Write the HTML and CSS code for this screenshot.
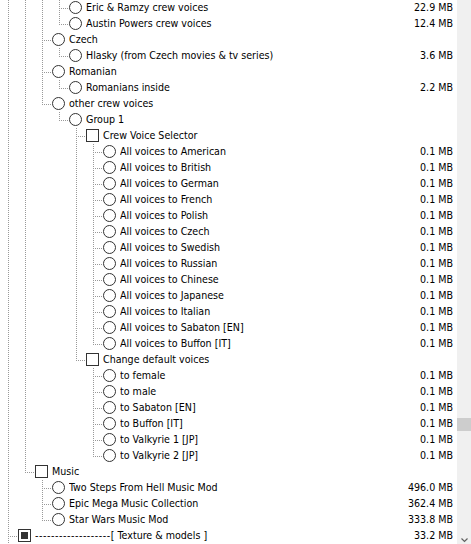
FILE: index.html
```html
<!DOCTYPE html>
<html>
<head>
<meta charset="utf-8">
<link rel="stylesheet" href="styles.css">
</head>
<body>
<div class="window">
  <ul class="tree">
    <li class="row"><span class="g g-v"></span><span class="g g-v"></span><span class="g g-v"></span><span class="g g-t"></span><span class="icon radio"></span><span class="label">Eric &amp; Ramzy crew voices</span><span class="size">22.9 MB</span></li>
    <li class="row"><span class="g g-v"></span><span class="g g-v"></span><span class="g g-v"></span><span class="g g-l"></span><span class="icon radio"></span><span class="label">Austin Powers crew voices</span><span class="size">12.4 MB</span></li>
    <li class="row"><span class="g g-v"></span><span class="g g-v"></span><span class="g g-t"></span><span class="icon radio"></span><span class="label">Czech</span></li>
    <li class="row"><span class="g g-v"></span><span class="g g-v"></span><span class="g g-v"></span><span class="g g-l"></span><span class="icon radio"></span><span class="label">Hlasky (from Czech movies &amp; tv series)</span><span class="size">3.6 MB</span></li>
    <li class="row"><span class="g g-v"></span><span class="g g-v"></span><span class="g g-t"></span><span class="icon radio"></span><span class="label">Romanian</span></li>
    <li class="row"><span class="g g-v"></span><span class="g g-v"></span><span class="g g-v"></span><span class="g g-l"></span><span class="icon radio"></span><span class="label">Romanians inside</span><span class="size">2.2 MB</span></li>
    <li class="row"><span class="g g-v"></span><span class="g g-v"></span><span class="g g-l"></span><span class="icon radio"></span><span class="label">other crew voices</span></li>
    <li class="row"><span class="g g-v"></span><span class="g g-v"></span><span class="g"></span><span class="g g-l"></span><span class="icon radio"></span><span class="label">Group 1</span></li>
    <li class="row"><span class="g g-v"></span><span class="g g-v"></span><span class="g"></span><span class="g"></span><span class="g g-t"></span><span class="icon check"></span><span class="label">Crew Voice Selector</span></li>
    <li class="row"><span class="g g-v"></span><span class="g g-v"></span><span class="g"></span><span class="g"></span><span class="g g-v"></span><span class="g g-t"></span><span class="icon radio"></span><span class="label">All voices to American</span><span class="size">0.1 MB</span></li>
    <li class="row"><span class="g g-v"></span><span class="g g-v"></span><span class="g"></span><span class="g"></span><span class="g g-v"></span><span class="g g-t"></span><span class="icon radio"></span><span class="label">All voices to British</span><span class="size">0.1 MB</span></li>
    <li class="row"><span class="g g-v"></span><span class="g g-v"></span><span class="g"></span><span class="g"></span><span class="g g-v"></span><span class="g g-t"></span><span class="icon radio"></span><span class="label">All voices to German</span><span class="size">0.1 MB</span></li>
    <li class="row"><span class="g g-v"></span><span class="g g-v"></span><span class="g"></span><span class="g"></span><span class="g g-v"></span><span class="g g-t"></span><span class="icon radio"></span><span class="label">All voices to French</span><span class="size">0.1 MB</span></li>
    <li class="row"><span class="g g-v"></span><span class="g g-v"></span><span class="g"></span><span class="g"></span><span class="g g-v"></span><span class="g g-t"></span><span class="icon radio"></span><span class="label">All voices to Polish</span><span class="size">0.1 MB</span></li>
    <li class="row"><span class="g g-v"></span><span class="g g-v"></span><span class="g"></span><span class="g"></span><span class="g g-v"></span><span class="g g-t"></span><span class="icon radio"></span><span class="label">All voices to Czech</span><span class="size">0.1 MB</span></li>
    <li class="row"><span class="g g-v"></span><span class="g g-v"></span><span class="g"></span><span class="g"></span><span class="g g-v"></span><span class="g g-t"></span><span class="icon radio"></span><span class="label">All voices to Swedish</span><span class="size">0.1 MB</span></li>
    <li class="row"><span class="g g-v"></span><span class="g g-v"></span><span class="g"></span><span class="g"></span><span class="g g-v"></span><span class="g g-t"></span><span class="icon radio"></span><span class="label">All voices to Russian</span><span class="size">0.1 MB</span></li>
    <li class="row"><span class="g g-v"></span><span class="g g-v"></span><span class="g"></span><span class="g"></span><span class="g g-v"></span><span class="g g-t"></span><span class="icon radio"></span><span class="label">All voices to Chinese</span><span class="size">0.1 MB</span></li>
    <li class="row"><span class="g g-v"></span><span class="g g-v"></span><span class="g"></span><span class="g"></span><span class="g g-v"></span><span class="g g-t"></span><span class="icon radio"></span><span class="label">All voices to Japanese</span><span class="size">0.1 MB</span></li>
    <li class="row"><span class="g g-v"></span><span class="g g-v"></span><span class="g"></span><span class="g"></span><span class="g g-v"></span><span class="g g-t"></span><span class="icon radio"></span><span class="label">All voices to Italian</span><span class="size">0.1 MB</span></li>
    <li class="row"><span class="g g-v"></span><span class="g g-v"></span><span class="g"></span><span class="g"></span><span class="g g-v"></span><span class="g g-t"></span><span class="icon radio"></span><span class="label">All voices to Sabaton [EN]</span><span class="size">0.1 MB</span></li>
    <li class="row"><span class="g g-v"></span><span class="g g-v"></span><span class="g"></span><span class="g"></span><span class="g g-v"></span><span class="g g-l"></span><span class="icon radio"></span><span class="label">All voices to Buffon [IT]</span><span class="size">0.1 MB</span></li>
    <li class="row"><span class="g g-v"></span><span class="g g-v"></span><span class="g"></span><span class="g"></span><span class="g g-l"></span><span class="icon check"></span><span class="label">Change default voices</span></li>
    <li class="row"><span class="g g-v"></span><span class="g g-v"></span><span class="g"></span><span class="g"></span><span class="g"></span><span class="g g-t"></span><span class="icon radio"></span><span class="label">to female</span><span class="size">0.1 MB</span></li>
    <li class="row"><span class="g g-v"></span><span class="g g-v"></span><span class="g"></span><span class="g"></span><span class="g"></span><span class="g g-t"></span><span class="icon radio"></span><span class="label">to male</span><span class="size">0.1 MB</span></li>
    <li class="row"><span class="g g-v"></span><span class="g g-v"></span><span class="g"></span><span class="g"></span><span class="g"></span><span class="g g-t"></span><span class="icon radio"></span><span class="label">to Sabaton [EN]</span><span class="size">0.1 MB</span></li>
    <li class="row"><span class="g g-v"></span><span class="g g-v"></span><span class="g"></span><span class="g"></span><span class="g"></span><span class="g g-t"></span><span class="icon radio"></span><span class="label">to Buffon [IT]</span><span class="size">0.1 MB</span></li>
    <li class="row"><span class="g g-v"></span><span class="g g-v"></span><span class="g"></span><span class="g"></span><span class="g"></span><span class="g g-t"></span><span class="icon radio"></span><span class="label">to Valkyrie 1 [JP]</span><span class="size">0.1 MB</span></li>
    <li class="row"><span class="g g-v"></span><span class="g g-v"></span><span class="g"></span><span class="g"></span><span class="g"></span><span class="g g-l"></span><span class="icon radio"></span><span class="label">to Valkyrie 2 [JP]</span><span class="size">0.1 MB</span></li>
    <li class="row"><span class="g g-v"></span><span class="g g-l"></span><span class="icon check"></span><span class="label">Music</span></li>
    <li class="row"><span class="g g-v"></span><span class="g"></span><span class="g g-t"></span><span class="icon radio"></span><span class="label">Two Steps From Hell Music Mod</span><span class="size">496.0 MB</span></li>
    <li class="row"><span class="g g-v"></span><span class="g"></span><span class="g g-t"></span><span class="icon radio"></span><span class="label">Epic Mega Music Collection</span><span class="size">362.4 MB</span></li>
    <li class="row"><span class="g g-v"></span><span class="g"></span><span class="g g-l"></span><span class="icon radio"></span><span class="label">Star Wars Music Mod</span><span class="size">333.8 MB</span></li>
    <li class="row"><span class="g g-t"></span><span class="icon check partial"></span><span class="label"><span class="rule">-------------------</span>[ Texture &amp; models ]</span><span class="size">33.2 MB</span></li>
  </ul>
  <div class="scrollbar">
    <div class="thumb"></div>
    <svg class="arrow" width="7" height="5" viewBox="0 0 7 5"><polyline points="0.5,0.5 3.5,3.5 6.5,0.5" fill="none" stroke="#606060" stroke-width="1.2"/></svg>
  </div>
</div>
</body>
</html>
```
FILE: styles.css
```css
:root {
  --dot: #999999;
  --dv: repeating-linear-gradient(to bottom, var(--dot) 0 1px, transparent 1px 2px);
  --dh: repeating-linear-gradient(to right, var(--dot) 0 1px, transparent 1px 2px);
}

html, body {
  margin: 0;
  padding: 0;
  background: #ffffff;
}

body {
  font-family: "DejaVu Sans Condensed", "DejaVu Sans", sans-serif;
  font-stretch: condensed;
  font-size: 10.6px;
  color: #000000;
}

.window {
  display: flex;
  width: 471px;
  height: 544px;
  overflow: hidden;
}

.tree {
  list-style: none;
  margin: 0;
  padding: 0 4px 0 0;
  width: 457px;
  flex: none;
  box-sizing: border-box;
}

.row {
  display: flex;
  align-items: flex-start;
  height: 16px;
  white-space: nowrap;
}

.g {
  width: 17px;
  height: 16px;
  flex: none;
  background-repeat: no-repeat;
}

.g-v {
  background-image: var(--dv);
  background-size: 1px 16px;
  background-position: 8px 0;
}

.g-t {
  background-image: var(--dv), var(--dh);
  background-size: 1px 16px, 7px 1px;
  background-position: 8px 0, 10px 8px;
}

.g-l {
  background-image: var(--dv), var(--dh);
  background-size: 1px 9px, 7px 1px;
  background-position: 8px 0, 10px 8px;
}

.icon {
  flex: none;
  width: 13px;
  height: 13px;
  box-sizing: border-box;
  border: 1px solid #333333;
  margin: 1px 4px 0 1px;
  background: #ffffff;
}

.radio {
  border-radius: 50%;
}

.check.partial {
  padding: 2px;
  background: #333333;
  background-clip: content-box;
}

.label,
.size {
  line-height: 14px;
  height: 14px;
}

.label {
  flex: 1;
  overflow: hidden;
}

.rule {
  letter-spacing: 0.55px;
}

.size {
  flex: none;
  text-align: right;
}

.scrollbar {
  width: 14px;
  flex: none;
  background: #f0f0f0;
  display: flex;
  flex-direction: column;
  align-items: flex-start;
}

.thumb {
  margin-top: 418px;
  width: 14px;
  height: 13px;
  background: #cdcdcd;
}

.arrow {
  display: block;
  margin-top: auto;
  margin-left: 4px;
  margin-bottom: 1px;
}
```
